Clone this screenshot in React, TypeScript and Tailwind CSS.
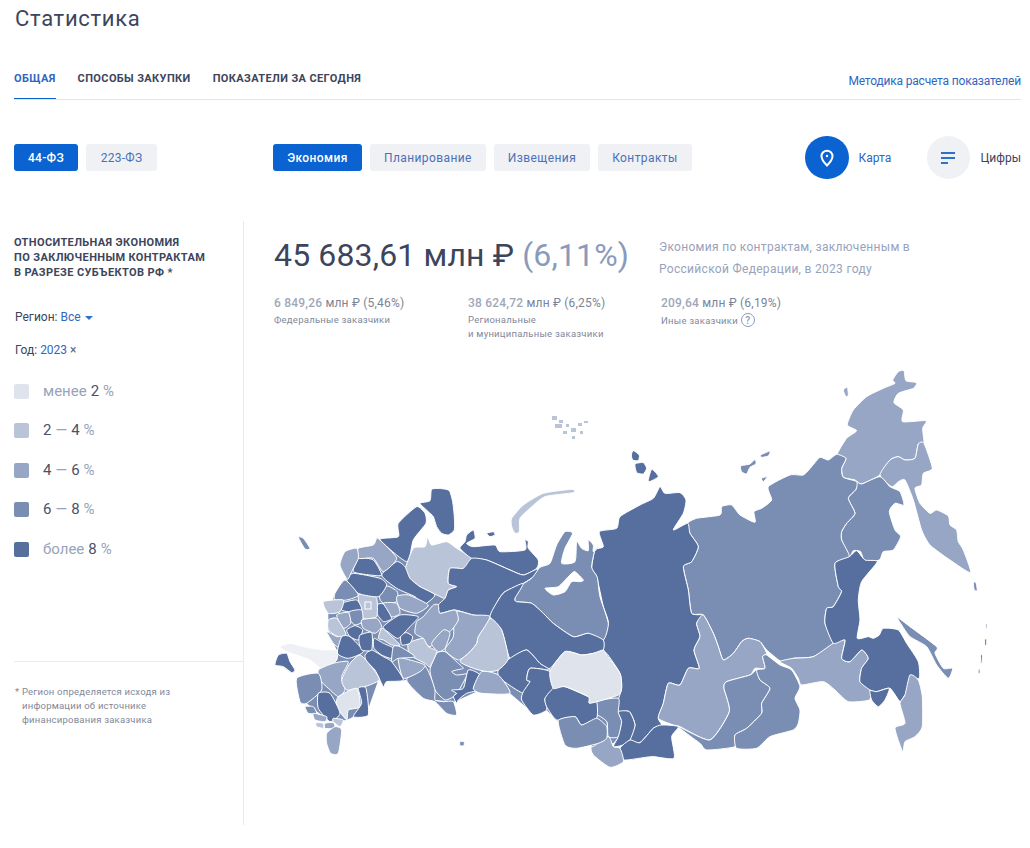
const C0 = "#dfe3ec"
const C1 = "#bac4d9"
const C2 = "#97a6c4"
const C3 = "#7a8eb3"
const C4 = "#566f9f"
const PALE = "#eef0f5"

// east part of the map, traced on a 3x grid with origin at 590,360
const east: [string, string][] = [
  [C2, "742,283 770,235 800,212 772,195 790,150 830,110 880,85 915,70 908,60 925,35 942,32 948,62 980,68 970,85 925,100 912,128 940,150 938,185 1008,182 998,205 1002,250 985,252 975,295 945,300 925,290 900,300 870,345 815,372 795,360 760,352 755,325 768,295"],
  [C2, "870,345 900,300 925,290 945,300 975,295 985,252 1002,250 1027,325 1000,340 995,375 975,385 990,430 1020,460 1040,450 1075,468 1080,495 1100,510 1105,545 1120,570 1142,638 1080,600 1020,555 995,510 970,420 945,360 925,365 905,380"],
  [C3, "800,365 815,372 870,350 900,380 930,395 942,435 915,430 898,455 915,510 932,530 910,570 880,575 868,600 825,605 812,575 790,572 778,590 755,540 755,515 770,490 795,460 775,415 798,388"],
  [C3, "293,490 320,475 390,465 395,440 425,435 450,465 495,487 492,455 515,445 545,420 535,380 600,345 640,345 665,320 690,292 715,300 740,283 768,295 755,325 760,352 800,365 798,388 775,415 795,460 770,490 755,515 755,540 778,590 735,610 745,680 755,695 730,740 710,745 705,790 730,850 670,890 610,895 575,905 530,870 510,845 475,835 455,845 430,880 400,900 385,860 370,820 340,765 305,760 295,690 280,620 305,605 325,560 300,520"],
  [C4, "28,515 80,505 90,470 150,435 190,415 210,380 225,400 270,398 288,420 280,460 250,510 293,490 300,520 325,560 305,605 280,620 295,690 305,760 340,765 320,790 330,830 312,870 328,925 295,925 270,975 235,970 220,1030 205,1075 215,1095 190,1105 150,1148 120,1140 135,1095 118,1055 85,1055 85,1020 95,985 90,940 50,880 30,870 55,790 40,740 20,650 5,625 15,570 40,560"],
  [C2, "340,765 370,820 385,860 400,900 430,880 455,845 475,835 510,845 530,880 518,890 525,925 495,925 480,945 410,965 402,985 418,1055 360,1140 270,1100 250,1095 205,1075 220,1030 235,970 270,975 295,925 328,925 312,870 330,830 320,790"],
  [C3, "402,985 410,965 480,945 500,930 510,960 540,985 515,1030 515,1060 470,1105 435,1125 435,1160 350,1170 330,1150 265,1100 360,1140 418,1055"],
  [C3, "530,885 570,915 605,930 630,980 615,1015 630,1050 625,1090 610,1110 540,1130 500,1165 440,1165 435,1125 470,1105 515,1060 515,1030 540,985 510,960 500,930 525,925 518,890"],
  [C2, "570,905 610,895 670,890 730,850 765,840 755,895 780,905 815,870 835,895 815,925 810,965 840,990 838,1020 775,1025 735,990 700,965 635,975 625,955 605,925"],
  [C4, "735,610 778,590 800,572 825,600 862,605 815,665 805,720 810,780 802,835 835,830 850,835 868,825 880,805 925,810 950,850 985,905 988,955 960,950 970,990 945,1005 930,1025 900,985 860,995 840,990 810,965 815,925 835,895 815,870 780,905 755,895 765,840 730,850 705,790 710,745 730,740 755,695 745,680"],
  [C4, "840,992 860,995 898,985 885,1020 865,1040 845,1020"],
  [C2, "945,1005 960,945 985,960 997,1010 997,1100 975,1130 945,1145 938,1175 915,1105 945,1090 930,1030"],
  [C3, "922,772 960,800 1040,860 1035,880 1060,925 1088,925 1075,955 1040,915 1010,860 960,830 935,795"],
  [C3, "452,318 480,312 495,298 498,312 480,322 470,342 455,335"],
  [C3, "512,285 540,273 535,288 515,292"],
  [C3, "514,355 532,350 520,365"],
  [C2, "760,90 772,82 775,105 768,110"],
  [C4, "130,272 148,285 145,302 128,300 124,285"],
  [C4, "135,312 160,308 170,325 160,342 140,338"],
  [C4, "185,328 205,350 175,365"],
  [C3, "1150,668 1158,668 1162,692 1153,690"],
  [C3, "1187,792 1191,792 1191,804 1187,804"],
  [C3, "1184,838 1190,838 1190,855 1184,855"],
  [C3, "1172,885 1178,885 1176,908 1172,908"],
  [C3, "1165,928 1170,928 1170,940 1165,940"],
  [C3, "20,1025 85,1015 85,1055 95,1085 85,1130 55,1130 50,1085 20,1065"],
  [C4, "85,1055 118,1055 135,1095 120,1140 100,1155 70,1160 85,1130 95,1085"],
  [C4, "90,1165 120,1140 150,1148 190,1105 215,1095 265,1100 245,1130 252,1195 185,1190 100,1200"],
  [C2, "5,1160 55,1130 70,1160 90,1165 100,1205 60,1222 10,1185"],
  [C3, "0,1085 20,1065 50,1085 50,1125 5,1160"],
  [C4, "0,1035 18,1030 20,1065 0,1080"],
]

// fills the slivers left between the traced western regions
const westBase = "262,298 295,235 360,178 445,245 460,205 635,235 835,268 1040,430 1085,620 1085,760 1060,790 1015,790 950,805 900,730 860,690 820,700 750,640 660,630 595,660 580,665 525,660 440,600 380,605 355,600 320,700 280,710 260,720 210,725 140,670 120,620 180,600 230,540 230,510 205,450 205,400 225,340"

// west part, same idea with origin at 260,480
const west: [string, string][] = [
  [C4, "515,28 545,26 568,32 578,65 583,110 583,150 565,165 545,160 530,140 520,110 505,95 480,70 510,62"],
  [C4, "360,178 415,170 415,130 470,80 495,100 498,130 460,180 445,245 410,225"],
  [C1, "435,270 460,205 495,200 503,170 515,195 560,185 590,205 635,235 610,265 570,265 565,310 590,320 565,330 555,355 520,340 480,320 450,295"],
  [C4, "600,205 615,185 620,165 640,150 645,175 620,190 640,200 705,195 720,215 795,210 795,180 805,185 805,205 835,240 830,265 790,285 750,270 680,240 635,235"],
  [C4, "635,235 680,240 750,270 790,285 830,268 835,280 790,310 735,335 715,360 690,410 640,405 585,390 540,400 535,375 555,355 565,330 590,320 565,310 570,265 610,265"],
  [C4, "680,160 700,155 705,165 690,170"],
  [C1, "755,115 790,75 850,40 935,28 940,38 855,50 810,85 780,115 778,155 765,160 755,140"],
  [C3, "765,355 770,325 815,295 840,262 870,250 890,195 915,155 938,160 915,205 905,250 945,245 950,185 965,205 985,212 985,180 1000,195 1000,215 1018,200 1005,210 995,262 1012,292 1020,350 1045,430 1030,480 985,460 940,470 880,430 850,400 815,370 770,365"],
  ["#ffffff", "855,325 895,320 930,285 945,275 970,300 960,305 935,305 915,335 880,345"],
  [C4, "690,410 715,360 735,335 790,310 765,355 770,365 815,370 850,400 880,430 940,470 985,460 1030,480 1030,510 1000,520 965,525 915,515 870,565 840,550 800,510 750,535 725,450"],
  [C4, "750,535 800,510 840,550 870,570 810,565 800,600 810,605 790,640 720,595 715,570"],
  [C4, "810,565 870,575 880,630 855,655 860,690 820,705 785,660 790,635 810,605 800,600"],
  [C4, "880,625 915,620 985,650 1010,665 1010,715 965,735 945,710 890,720 860,680 855,655"],
  [C0, "870,575 915,515 965,525 1000,520 1030,510 1040,525 1080,580 1085,620 1075,645 990,670 985,650 915,620 880,625"],
  [C3, "895,722 945,710 965,735 1010,715 1040,740 1040,775 1015,790 950,805 915,795"],
  [C1, "600,545 630,515 650,490 655,470 690,415 725,450 745,535 715,570 680,575 640,565"],
  [C2, "555,510 580,470 585,395 640,405 690,410 655,470 650,490 630,515 595,540"],
  [C3, "510,570 530,520 555,515 595,550 610,565 590,570 575,575 590,585 625,580 630,570 600,625 580,650 555,660 525,630"],
  [C4, "575,630 610,625 625,570 660,585 640,625 660,630 620,640 595,660 590,670 580,650 590,640"],
  [C2, "640,625 665,575 715,585 750,640 665,640"],
  [C3, "440,600 490,555 510,585 525,630 525,660 550,665 580,665 590,705 560,700 525,665 490,655"],
  [C2, "415,535 450,540 495,555 480,575 430,595"],
  [C4, "315,525 335,510 370,530 395,545 430,600 380,605 370,620 345,570 320,545"],
  [C1, "445,490 490,475 505,500 530,515 510,560 495,550 450,525"],
  [C4, "422,465 440,458 458,470 450,490 425,495"],
  [C2, "470,425 490,410 520,375 535,375 540,400 585,390 595,420 570,455 510,500 490,475 465,460"],
  [C2, "515,490 550,450 570,460 555,505 535,515"],
  [C4, "370,440 420,405 475,410 450,440 415,475 390,460"],
  [C4, "365,285 410,245 435,260 450,295 480,320 525,345 490,375 465,350 410,325"],
  [C3, "358,350 380,318 412,335 410,365 370,370"],
  [C2, "410,350 445,345 505,375 470,400 420,385"],
  [C2, "370,370 410,370 420,400 395,410"],
  [C4, "350,375 370,372 395,415 370,425 350,400"],
  [C1, "295,345 325,340 350,355 350,410 310,415 300,385"],
  [C4, "245,370 290,360 305,390 265,395 245,390"],
  [C4, "260,300 280,280 360,295 380,315 355,350 295,340"],
  [C4, "280,275 295,235 340,240 365,285 330,285"],
  [C3, "225,340 255,300 295,345 260,360 225,360"],
  [C1, "190,365 250,360 240,395 205,400"],
  [C3, "268,395 305,390 308,425 285,435 270,420"],
  [C2, "230,405 265,398 272,430 250,445"],
  [C1, "205,420 230,415 258,462 235,470 205,450"],
  [C2, "305,420 350,415 365,440 345,460 310,445"],
  [C2, "200,455 230,470 245,470 240,505 220,490"],
  [C4, "260,450 285,437 308,450 295,480 270,470"],
  [C4, "245,470 270,470 310,515 265,535 232,520"],
  [C4, "300,465 335,458 335,510 305,510 297,485"],
  [C4, "342,475 370,490 400,505 395,535 365,525 342,505"],
  [C1, "355,475 365,445 385,460 420,495 395,495 370,480"],
  [C3, "400,500 420,500 465,530 415,535 395,545"],
  [C4, "55,525 80,520 90,545 105,570 95,578 70,560 45,555"],
  [PALE, "60,500 90,490 130,500 190,510 230,510 230,540 190,570 150,540 80,515"],
  [C2, "175,570 220,550 265,545 245,590 255,630 235,650 205,625 180,600"],
  [C3, "110,595 175,580 185,630 140,670 120,665"],
  [C1, "245,600 270,550 300,525 330,555 358,600 300,625 260,630"],
  [C0, "235,650 290,625 300,680 265,690 260,720 230,680"],
  [C4, "295,625 318,625 325,705 280,710 305,670"],
  [C4, "175,640 210,640 240,700 210,725 175,685"],
  [C3, "135,680 160,680 170,700 145,700"],
  [C2, "160,700 200,710 195,725 165,720"],
  [C1, "168,728 190,730 190,745 170,740"],
  [C2, "195,730 220,728 225,745 195,745"],
  [C1, "220,715 250,720 240,740 220,725"],
  [C2, "200,760 225,740 245,750 235,820 212,820 200,790"],
  [C2, "295,205 340,195 350,175 360,180 410,235 370,275 340,235 295,235"],
  [C2, "240,255 255,215 290,205 295,235 275,275 262,298"],
  [C3, "600,785 612,785 612,797 600,797"],
  [C3, "115,172 130,175 150,205 135,207"],
]

// rounds a traced polygon a little (closed Catmull-Rom)
function smooth(points: string) {
  const p = points.split(" ").map((s) => s.split(",").map(Number))
  const n = p.length
  let d = `M${p[0][0]} ${p[0][1]}`
  for (let i = 0; i < n; i++) {
    const a = p[(i - 1 + n) % n]
    const b = p[i]
    const c = p[(i + 1) % n]
    const e = p[(i + 2) % n]
    const k = 0.1
    d += `C${b[0] + (c[0] - a[0]) * k} ${b[1] + (c[1] - a[1]) * k} ${c[0] - (e[0] - b[0]) * k} ${c[1] - (e[1] - b[1]) * k} ${c[0]} ${c[1]}`
  }
  return d + "Z"
}

const tabs = ["Способы закупки", "Показатели за сегодня"]
const topics = ["Планирование", "Извещения", "Контракты"]
const legend = [
  { color: C0, pre: "менее", num: "2" },
  { color: C1, num: "2 ", dash: true, to: " 4" },
  { color: C2, num: "4 ", dash: true, to: " 6" },
  { color: C3, num: "6 ", dash: true, to: " 8" },
  { color: C4, pre: "более", num: "8" },
]
const stats = [
  { value: "6 849,26", pct: "(5,46%)", label: ["Федеральные заказчики"], w: "w-[194px]" },
  { value: "38 624,72", pct: "(6,25%)", label: ["Региональные", "и муниципальные заказчики"], w: "w-[193px]" },
  { value: "209,64", pct: "(6,19%)", label: ["Иные заказчики"], w: "w-[190px]", help: true },
]

function RussiaMap() {
  return (
    <svg viewBox="274 360 730 420" className="mt-[18px] block h-[420px] w-[730px]">
      <polygon transform="translate(260 480) scale(0.3333)" fill={C3} points={westBase} />
      <g transform="translate(590 360) scale(0.3333)" stroke="#fff" strokeWidth="3" strokeLinejoin="round">
        {east.map(([fill, points], i) => (
          <path key={i} fill={fill} d={smooth(points)} />
        ))}
      </g>
      <g transform="translate(260 480) scale(0.3333)" stroke="#fff" strokeWidth="3" strokeLinejoin="round">
        {west.map(([fill, points], i) => (
          <path key={i} fill={fill} d={smooth(points)} />
        ))}
      </g>
      <rect x="365" y="602" width="6" height="7" fill="none" stroke="#fff" strokeWidth="1" />
      <g fill={C1}>
        <rect x="552" y="416" width="5" height="4" />
        <rect x="559" y="420" width="4" height="3" />
        <rect x="555" y="424" width="7" height="4" />
        <rect x="566" y="424" width="3" height="3" />
        <rect x="571" y="428" width="5" height="4" />
        <rect x="563" y="431" width="4" height="3" />
        <rect x="578" y="423" width="4" height="3" />
        <rect x="584" y="421" width="4" height="2" />
        <rect x="572" y="436" width="3" height="3" />
        <rect x="580" y="431" width="3" height="3" />
      </g>
    </svg>
  )
}

export default function App() {
  return (
    <div className="h-[848px] w-[1030px] overflow-hidden bg-white pl-[14px] pr-[9px] font-[Roboto,sans-serif] text-[#3c455c]">
      <h1 className="h-[38px] pl-px text-[22px] leading-[38px] tracking-[0.7px]">Статистика</h1>

      <div className="mt-[21px] flex h-[41px] items-start justify-between border-b border-[#e2e5ea]">
        <div className="flex gap-[22px] text-[11px] font-bold uppercase leading-[40px] tracking-[0.38px]">
          <a className="h-[40px] border-b border-[#0a63d0] text-[#2f66c0]">Общая</a>
          {tabs.map((t) => (
            <a key={t}>{t}</a>
          ))}
        </div>
        <a className="mt-[3px] text-xs leading-[38px] tracking-[-0.18px] text-[#2f66c0]">Методика расчета показателей</a>
      </div>

      <div className="mt-[36px] flex h-[43px] items-center">
        <div className="flex w-[259px] gap-2">
          <button className="h-[27px] w-[64px] rounded-[3px] bg-[#0a63d0] text-xs font-medium tracking-[0.3px] text-white">44-ФЗ</button>
          <button className="h-[27px] w-[71px] rounded-[3px] bg-[#eff1f4] text-xs tracking-[0.3px] text-[#4c70b8]">223-ФЗ</button>
        </div>
        <div className="flex gap-2">
          <button className="h-[27px] w-[89px] rounded-[3px] bg-[#0a63d0] text-xs font-medium tracking-[0.4px] text-white">Экономия</button>
          {topics.map((t) => (
            <button key={t} className="h-[27px] rounded-[3px] bg-[#eff1f4] px-[14px] text-xs tracking-[0.4px] text-[#4c70b8]">
              {t}
            </button>
          ))}
        </div>
        <div className="ml-auto flex items-center">
          <span className="flex h-[43px] w-[44px] items-center justify-center rounded-full bg-[#0a63d0]">
            <svg width="14" height="18" viewBox="0 0 14 18" fill="none" stroke="#fff" strokeWidth="2">
              <path d="M7 16.5C3.5 13 1.5 10.5 1.5 7.2a5.5 5.5 0 0 1 11 0c0 3.3-2 5.8-5.5 9.3z" />
              <circle cx="7" cy="7" r="1.2" fill="#fff" stroke="none" />
            </svg>
          </span>
          <span className="ml-[10px] w-[68px] text-xs text-[#2f66c0]">Карта</span>
          <span className="flex h-[43px] w-[43px] items-center justify-center rounded-full bg-[#eff1f4]">
            <svg width="14" height="12" viewBox="0 0 14 12" fill="#2f6fce">
              <rect x="0" y="0" width="14" height="2" />
              <rect x="0" y="5" width="14" height="2" />
              <rect x="0" y="10" width="7" height="2" />
            </svg>
          </span>
          <span className="ml-[11px] text-xs">Цифры</span>
        </div>
      </div>

      <div className="mt-[42px] flex items-start">
        <aside className="h-[604px] w-[230px] shrink-0 border-r border-[#e8eaee]">
          <h2 className="mt-[14px] text-[11px] font-bold uppercase leading-[15px] tracking-[0.38px]">
            Относительная экономия
            <br />
            по заключенным контрактам
            <br />в разрезе субъектов РФ *
          </h2>
          <p className="mt-[29px] pl-px text-xs leading-[16px]">
            Регион: <span className="text-[#2f66c0]">Все</span>
            <span className="ml-1 inline-block border-x-4 border-t-4 border-x-transparent border-t-[#2f6fce] align-middle" />
          </p>
          <p className="mt-[17px] pl-px text-xs leading-[16px]">
            Год: <span className="text-[#2f66c0]">2023</span> <span className="text-[#5a6478]">×</span>
          </p>
          <ul className="mt-[23px] flex flex-col gap-[19.5px]">
            {legend.map((l, i) => (
              <li key={i} className="flex h-5 items-center text-[15px] text-[#97a3ba]">
                <span className="mr-[14px] h-[15px] w-[15px] rounded-[2px]" style={{ backgroundColor: l.color }} />
                {l.pre && <span className="mr-1">{l.pre}</span>}
                <span className="text-[#4a5265]">{l.num}</span>
                {l.dash && <span className="mx-1">—</span>}
                {l.to && <span className="text-[#4a5265]">{l.to}</span>}
                <span className="ml-1">%</span>
              </li>
            ))}
          </ul>
          <div className="mt-[102px] border-t border-[#e8eaee] pt-[23px] text-[9.5px] leading-[14px] tracking-[0.22px] text-[#7f8899]">
            <p className="pl-2 -indent-[7px]">
              * Регион определяется исходя из
              <br />
              информации об источнике
              <br />
              финансирования заказчика
            </p>
          </div>
        </aside>

        <main className="ml-[30px] min-w-0 flex-1">
          <div className="mt-[13px] flex">
            <div className="w-[385px] whitespace-nowrap text-[32px] leading-[42px] tracking-[0.15px]">
              45 683,61 млн ₽ <span className="text-[#8a9abb]">(6,11%)</span>
            </div>
            <p className="mt-[2px] text-xs leading-[22px] tracking-[0.3px] text-[#97a3ba]">
              Экономия по контрактам, заключенным в
              <br />
              Российской Федерации, в 2023 году
            </p>
          </div>
          <div className="mt-[14px] flex h-[48px]">
            {stats.map((s) => (
              <div key={s.value} className={s.w}>
                <p className="text-xs leading-[18px] tracking-[0.2px] text-[#7b8496]">
                  <b className="font-medium text-[#a0a8b8]">{s.value}</b> млн ₽ {s.pct}
                </p>
                {s.label.map((line) => (
                  <p key={line} className="mt-[1px] flex items-center text-[9.5px] leading-[13px] tracking-[0.25px] text-[#7f8899]">
                    {line}
                    {s.help && (
                      <span className="ml-[3px] flex h-[14px] w-[14px] items-center justify-center rounded-full border border-[#8a9abb] text-[10px] font-medium text-[#8a9abb]">
                        ?
                      </span>
                    )}
                  </p>
                ))}
              </div>
            ))}
          </div>
          <RussiaMap />
        </main>
      </div>
    </div>
  )
}
